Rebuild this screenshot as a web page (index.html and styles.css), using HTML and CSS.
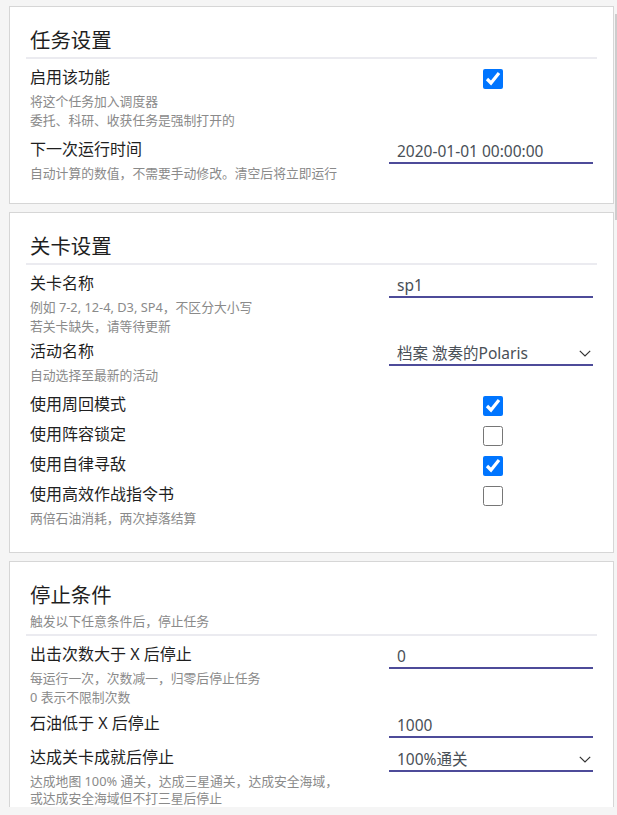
FILE: index.html
```html
<!DOCTYPE html>
<html lang="zh-CN">
<head>
<meta charset="utf-8">
<title>任务设置</title>
<link rel="stylesheet" href="styles.css">
</head>
<body>
<div class="viewport">
  <section class="card">
    <header class="card-head"><h2 class="card-title">任务设置</h2></header>
    <div class="items">
      <div class="item">
        <div class="row"><span class="label">启用该功能</span><div class="control"><input type="checkbox" class="check" checked></div></div>
        <p class="desc">将这个任务加入调度器<br>委托、科研、收获任务是强制打开的</p>
      </div>
      <div class="item mt8">
        <div class="row"><span class="label">下一次运行时间</span><div class="control field"><span>2020-01-01 00:00:00</span></div></div>
        <p class="desc">自动计算的数值，不需要手动修改。清空后将立即运行</p>
      </div>
    </div>
  </section>

  <section class="card pb-lg">
    <header class="card-head"><h2 class="card-title">关卡设置</h2></header>
    <div class="items">
      <div class="item">
        <div class="row"><span class="label">关卡名称</span><div class="control field"><span>sp1</span></div></div>
        <p class="desc">例如 7-2, 12-4, D3, SP4，不区分大小写<br>若关卡缺失，请等待更新</p>
      </div>
      <div class="item">
        <div class="row"><span class="label">活动名称</span><div class="control field select"><span>档案 激奏的Polaris</span><svg class="chev" width="12" height="7" viewBox="0 0 12 7"><path d="M0.8 0.8 L6 6 L11.2 0.8" fill="none" stroke="#333" stroke-width="1.2"/></svg></div></div>
        <p class="desc">自动选择至最新的活动</p>
      </div>
      <div class="item mt8">
        <div class="row"><span class="label">使用周回模式</span><div class="control"><input type="checkbox" class="check" checked></div></div>
      </div>
      <div class="item">
        <div class="row"><span class="label">使用阵容锁定</span><div class="control"><input type="checkbox" class="check"></div></div>
      </div>
      <div class="item">
        <div class="row"><span class="label">使用自律寻敌</span><div class="control"><input type="checkbox" class="check" checked></div></div>
      </div>
      <div class="item">
        <div class="row"><span class="label">使用高效作战指令书</span><div class="control"><input type="checkbox" class="check"></div></div>
        <p class="desc">两倍石油消耗，两次掉落结算</p>
      </div>
    </div>
  </section>

  <section class="card">
    <header class="card-head"><h2 class="card-title">停止条件</h2><p class="card-sub">触发以下任意条件后，停止任务</p></header>
    <div class="items">
      <div class="item">
        <div class="row"><span class="label">出击次数大于 X 后停止</span><div class="control field"><span>0</span></div></div>
        <p class="desc">每运行一次，次数减一，归零后停止任务<br>0 表示不限制次数</p>
      </div>
      <div class="item mt5">
        <div class="row"><span class="label">石油低于 X 后停止</span><div class="control field"><span>1000</span></div></div>
      </div>
      <div class="item mt8">
        <div class="row"><span class="label">达成关卡成就后停止</span><div class="control field select"><span>100%通关</span><svg class="chev" width="12" height="7" viewBox="0 0 12 7"><path d="M0.8 0.8 L6 6 L11.2 0.8" fill="none" stroke="#333" stroke-width="1.2"/></svg></div></div>
        <p class="desc tight">达成地图 100% 通关，达成三星通关，达成安全海域，<br>或达成安全海域但不打三星后停止</p>
      </div>
    </div>
  </section>
</div>
<div class="scroll-thumb"></div>
</body>
</html>
```

FILE: styles.css
```css
html, body {
  margin: 0;
  padding: 0;
}

body {
  background: #f5f5f5;
  font-family: "Noto Sans", "Noto Sans CJK SC", sans-serif;
  color: #222;
  width: 617px;
  position: relative;
}

.viewport {
  box-sizing: border-box;
  width: 614px;
  height: 807px;
  overflow: hidden;
  padding: 6px 0 0 9px;
  display: flex;
  flex-direction: column;
  gap: 8px;
}

.card {
  flex: none;
  background: #fff;
  border: 1px solid #d6d6d6;
  padding: 19px 16px 20px;
}

.card.pb-lg {
  padding-bottom: 24px;
}

.card-head {
  padding: 0 4px 3px;
  border-bottom: 2px solid #ebebf0;
}

.card-title {
  margin: 0;
  font-size: 20.4px;
  line-height: 28px;
  font-weight: 400;
  color: #1f1f1f;
}

.card-sub {
  margin: 3px 0 0;
  font-size: 12.8px;
  line-height: 19px;
  color: #8a8a8a;
}

.items {
  padding: 7px 4px 0;
}

.item + .item {
  margin-top: 4px;
}

.item.mt5 {
  margin-top: 5px;
}

.item.mt8 {
  margin-top: 8px;
}

.row {
  display: flex;
  justify-content: space-between;
  align-items: flex-start;
  height: 26px;
}

.label {
  font-size: 16px;
  line-height: 22px;
  color: #1f1f1f;
}

.control {
  flex: none;
  width: 204px;
  height: 26px;
  box-sizing: border-box;
}

.check {
  display: block;
  width: 20px;
  height: 20px;
  margin: 3px 0 3px 94px;
}

.field {
  display: flex;
  align-items: center;
  justify-content: space-between;
  padding: 2px 8px 0;
  border-bottom: 2px solid #4d4b99;
  font-size: 15.5px;
  line-height: 22px;
  color: #495057;
}

.field.select {
  padding-right: 2px;
}

.chev {
  display: block;
}

.desc {
  margin: 0;
  font-size: 12.8px;
  line-height: 19px;
  color: #8a8a8a;
}

.desc.tight {
  line-height: 17px;
  padding-top: 1px;
}

.scroll-thumb {
  position: absolute;
  left: 615px;
  top: 14px;
  width: 2px;
  height: 206px;
  background: #cdcdcd;
}
```
